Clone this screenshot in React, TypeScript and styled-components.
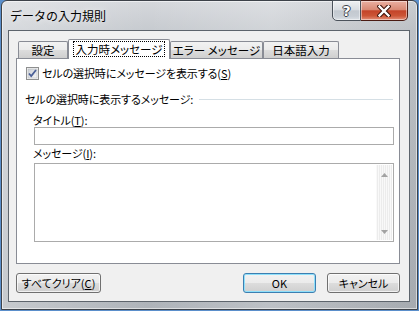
import styled, { createGlobalStyle } from 'styled-components'

const Global = createGlobalStyle`
  html, body {
    margin: 0;
    padding: 0;
  }
  body {
    width: 419px;
    height: 311px;
    overflow: hidden;
    background: #5b8fcb;
    font-family: 'Noto Sans CJK JP', 'Noto Sans', sans-serif;
    font-size: 12px;
    color: #000;
  }
`

const Window = styled.div`
  box-sizing: border-box;
  width: 417px;
  height: 310px;
  margin-left: 1px;
  padding: 0 7px 7px 6px;
  display: flex;
  flex-direction: column;
  border: 1px solid #3d4249;
  border-radius: 6px 6px 0 0;
  background:
    linear-gradient(90deg, rgba(255, 255, 255, 0.3), rgba(255, 255, 255, 0) 35%, rgba(255, 255, 255, 0.18) 65%, rgba(0, 0, 0, 0.05)),
    linear-gradient(180deg, #d5d8dc 0, #c7cbd0 28px, #aeb3b9 100%);
  box-shadow: inset 0 0 0 1px rgba(255, 255, 255, 0.55);
`

const TitleBar = styled.div`
  height: 29px;
  display: flex;
  flex-shrink: 0;
`

const Title = styled.div`
  flex: 1;
  align-self: center;
  margin: 0 0 0 2px;
  font-size: 12px;
  line-height: 16px;
  color: #000;
  text-shadow: 0 0 6px rgba(255, 255, 255, 0.9);
`

const CaptionButtons = styled.div`
  display: flex;
  align-self: flex-start;
  margin: -1px 2px 0 0;
`

const CaptionButton = styled.div<{ $close?: boolean }>`
  box-sizing: border-box;
  width: ${p => (p.$close ? '47px' : '29px')};
  height: 21px;
  display: flex;
  align-items: center;
  justify-content: center;
  border: 1px solid ${p => (p.$close ? '#4a1a12' : '#4b525b')};
  border-left-width: ${p => (p.$close ? '0' : '1px')};
  border-radius: ${p => (p.$close ? '0 0 5px 0' : '0 0 0 5px')};
  background: ${p =>
    p.$close
      ? 'linear-gradient(180deg, #eab0a2 0%, #d98a75 45%, #c44429 52%, #cc5536 78%, #e4907a 100%)'
      : 'linear-gradient(180deg, #eef0f2 0%, #d9dde2 45%, #c3c9d0 52%, #c8ced5 80%, #dce1e6 100%)'};
  box-shadow: inset 0 0 0 1px rgba(255, 255, 255, 0.45);
`

const HelpGlyph = styled.span`
  font-family: 'DejaVu Sans', sans-serif;
  font-weight: bold;
  font-size: 14px;
  line-height: 14px;
  color: #fff;
  margin-top: 1px;
  text-shadow: -1px 0 #3b4148, 1px 0 #3b4148, 0 -1px #3b4148, 0 1px #3b4148;
`

const Client = styled.div`
  flex: 1;
  display: flex;
  flex-direction: column;
  padding: 8px 9px 8px 7px;
  border: 1px solid #5d646c;
  background: #f0f0f0;
`

const TabStrip = styled.div`
  display: flex;
  align-items: flex-end;
  height: 19px;
  padding-left: 2px;
`

const Tab = styled.div<{ $active?: boolean; $width: number }>`
  position: relative;
  box-sizing: border-box;
  width: ${p => p.$width}px;
  height: ${p => (p.$active ? '20px' : '17px')};
  margin-bottom: ${p => (p.$active ? '-1px' : '0')};
  z-index: ${p => (p.$active ? 1 : 0)};
  display: flex;
  align-items: center;
  justify-content: center;
  padding-bottom: ${p => (p.$active ? '2px' : '0')};
  border: 1px solid #898c95;
  border-bottom: none;
  border-radius: 2px 2px 0 0;
  background: ${p =>
    p.$active ? '#fff' : 'linear-gradient(180deg, #f2f2f2 0%, #ebebeb 50%, #dddddd 50%, #cfcfcf 100%)'};
  font-size: 11.5px;
  font-feature-settings: 'palt';
  line-height: 14px;
  white-space: nowrap;
`

const FocusLabel = styled.span`
  padding: 0 2px;
  outline: 1px dotted #000;
  outline-offset: 0;
`

const Panel = styled.div`
  box-sizing: border-box;
  height: 206px;
  display: flex;
  flex-direction: column;
  padding: 7px 5px 0 8px;
  border: 1px solid #898c95;
  background: #fff;
  font-size: 11px;
  letter-spacing: -0.1px;
  font-feature-settings: 'palt';
  line-height: 14px;
`

const CheckRow = styled.label`
  display: flex;
  align-items: center;
  gap: 3px;
  margin-left: 1px;
  height: 14px;
`

const GroupHead = styled.div`
  display: flex;
  align-items: center;
  margin-top: 12px;
  height: 14px;
`

const GroupLine = styled.div`
  flex: 1;
  height: 1px;
  margin: 1px 1px 0 6px;
  background: #d5dfe5;
`

const FieldLabel = styled.div<{ $top: number }>`
  margin: ${p => p.$top}px 0 0 8px;
  height: 14px;
`

const TextBox = styled.div`
  box-sizing: border-box;
  height: 18px;
  margin-left: 9px;
  border: 1px solid #ababab;
  background: #fff;
`

const MessageBox = styled.div`
  box-sizing: border-box;
  height: 79px;
  margin: 3px 0 0 9px;
  display: flex;
  justify-content: flex-end;
  padding: 1px 1px 1px 0;
  border: 1px solid #ababab;
  background: #fff;
`

const ScrollBar = styled.div`
  width: 16px;
  display: flex;
  flex-direction: column;
  justify-content: space-between;
  align-items: center;
  padding: 8px 0 6px;
  background:
    repeating-linear-gradient(90deg, rgba(255, 255, 255, 0.7) 0 1px, rgba(255, 255, 255, 0) 1px 2px),
    #ececec;
`

const ButtonRow = styled.div`
  display: flex;
  align-items: center;
  gap: 11px;
  margin-top: 9px;
`

const Button = styled.button<{ $default?: boolean; $width: number }>`
  box-sizing: border-box;
  width: ${p => p.$width}px;
  height: 20px;
  padding: 0;
  border: 1px solid ${p => (p.$default ? '#3c7fb1' : '#707070')};
  border-radius: 3px;
  background: linear-gradient(180deg, #f2f2f2 0%, #ebebeb 50%, #dddddd 50%, #cfcfcf 100%);
  box-shadow: ${p => (p.$default ? 'inset 0 0 0 1px #8fe0fb' : 'inset 0 0 0 1px rgba(255, 255, 255, 0.7)')};
  font-family: 'Noto Sans CJK JP', 'Noto Sans', sans-serif;
  font-size: 11px;
  line-height: 14px;
  font-feature-settings: 'palt';
  color: #000;
  &:first-child {
    margin-right: auto;
  }
`

function CheckBox () {
  return (
    <svg width='13' height='13' viewBox='0 0 13 13'>
      <defs>
        <linearGradient id='cbIn' x1='0' y1='0' x2='1' y2='1'>
          <stop offset='0' stopColor='#cbcfd5' />
          <stop offset='1' stopColor='#f6f6f6' />
        </linearGradient>
      </defs>
      <rect x='0.5' y='0.5' width='12' height='12' fill='#f4f4f4' stroke='#8e8f8f' />
      <rect x='2' y='2' width='9' height='9' fill='url(#cbIn)' stroke='#aeb3b9' strokeWidth='0.5' />
      <path d='M3 6.5 L5.2 9 L10 3' fill='none' stroke='#4a5f97' strokeWidth='1.8' />
    </svg>
  )
}

function CloseGlyph () {
  return (
    <svg width='14' height='12' viewBox='0 0 14 12'>
      <path d='M2.5 1.5 L11.5 10.5 M11.5 1.5 L2.5 10.5' stroke='#3a1008' strokeWidth='4.4' strokeLinecap='square' />
      <path d='M2.5 1.5 L11.5 10.5 M11.5 1.5 L2.5 10.5' stroke='#fff' strokeWidth='2.4' strokeLinecap='square' />
    </svg>
  )
}

function Arrow ({ down }: { down?: boolean }) {
  return (
    <svg width='7' height='4' viewBox='0 0 7 4'>
      <path d={down ? 'M0 0 H7 L3.5 4 Z' : 'M3.5 0 L7 4 H0 Z'} fill='#a3a3a3' />
    </svg>
  )
}

function App () {
  return (
    <>
      <Global />
      <Window>
        <TitleBar>
          <Title>データの入力規則</Title>
          <CaptionButtons>
            <CaptionButton>
              <HelpGlyph>?</HelpGlyph>
            </CaptionButton>
            <CaptionButton $close>
              <CloseGlyph />
            </CaptionButton>
          </CaptionButtons>
        </TitleBar>
        <Client>
          <TabStrip>
            <Tab $width={50}>設定</Tab>
            <Tab $width={102} $active>
              <FocusLabel>入力時メッセージ</FocusLabel>
            </Tab>
            <Tab $width={93}>エラー メッセージ</Tab>
            <Tab $width={76}>日本語入力</Tab>
          </TabStrip>
          <Panel>
            <CheckRow>
              <CheckBox />
              <span>セルの選択時にメッセージを表示する(<u>S</u>)</span>
            </CheckRow>
            <GroupHead>
              <span>セルの選択時に表示するメッセージ:</span>
              <GroupLine />
            </GroupHead>
            <FieldLabel $top={7}>タイトル(<u>T</u>):</FieldLabel>
            <TextBox />
            <FieldLabel $top={1}>メッセージ(<u>I</u>):</FieldLabel>
            <MessageBox>
              <ScrollBar>
                <Arrow />
                <Arrow down />
              </ScrollBar>
            </MessageBox>
          </Panel>
          <ButtonRow>
            <Button $width={85}>すべてクリア(<u>C</u>)</Button>
            <Button $width={73} $default>OK</Button>
            <Button $width={73}>キャンセル</Button>
          </ButtonRow>
        </Client>
      </Window>
    </>
  )
}

export default App
